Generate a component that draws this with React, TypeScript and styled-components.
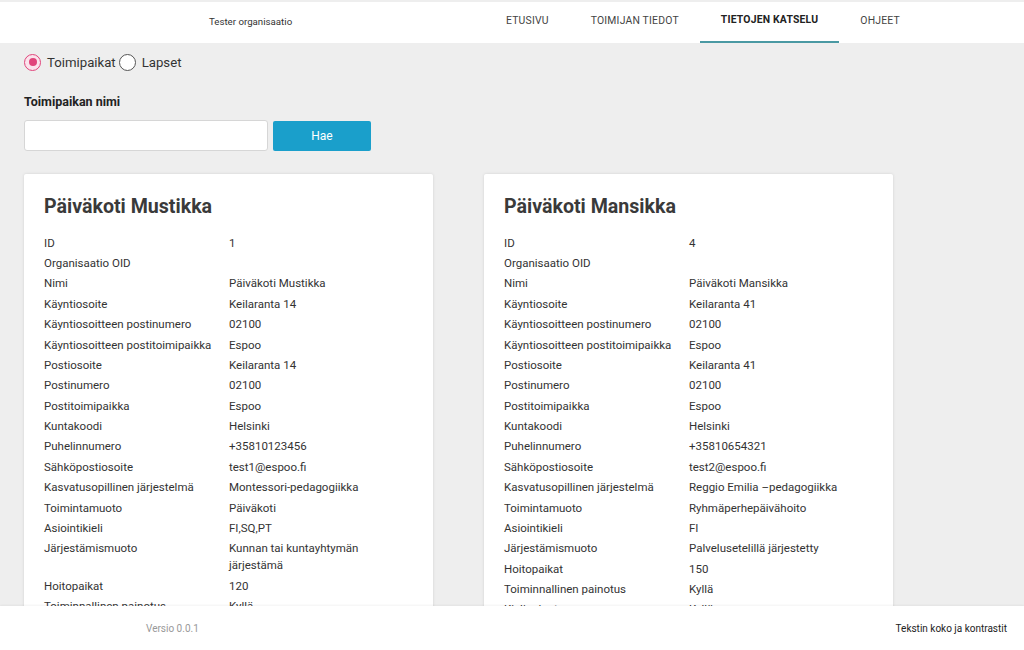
import * as React from "react";
import styled, { createGlobalStyle } from "styled-components";

const GlobalStyle = createGlobalStyle`
  html, body {
    margin: 0;
    padding: 0;
    height: 100%;
  }
  body {
    font-family: Roboto, "Noto Sans", "Liberation Sans", sans-serif;
    background: #eeeeee;
    color: #222;
  }
  * { box-sizing: border-box; }
`;

const SPage = styled.div`
  height: 100vh;
  display: flex;
  flex-direction: column;
  overflow: hidden;
`;

const SHeader = styled.header`
  flex: 0 0 auto;
  height: 41px;
  margin-top: 2px;
  background: #ffffff;
  display: flex;
  align-items: stretch;
`;

const SOrg = styled.div`
  width: 485px;
  padding-left: 209px;
  display: flex;
  align-items: center;
  font-size: 9.7px;
  color: #333;
  padding-bottom: 2px;
`;

const SNav = styled.nav`
  display: flex;
  align-items: stretch;
`;

interface ITabProps {
  active?: boolean;
}

const STab = styled.div<ITabProps>`
  padding: 0 21px;
  display: flex;
  align-items: center;
  font-size: 10.4px;
  letter-spacing: 0.2px;
  text-transform: uppercase;
  font-weight: ${({ active }) => (active ? 700 : 400)};
  color: ${({ active }) => (active ? "#222" : "#444")};
  border-bottom: 2px solid ${({ active }) => (active ? "#4a99a3" : "transparent")};
  padding-bottom: ${({ active }) => (active ? "4px" : "2px")};
`;

const SMain = styled.main`
  flex: 1 1 auto;
  overflow: hidden;
  padding: 9px 24px 0;
`;

const SRadioRow = styled.div`
  display: flex;
  align-items: center;
  height: 20px;
  font-size: 13.2px;
  color: #333;
`;

const SRadioLabel = styled.label`
  display: flex;
  align-items: center;
  gap: 6px;
  margin-right: 3px;
`;

const SRadioCircle = styled.span<{ checked?: boolean }>`
  width: 17px;
  height: 17px;
  border-radius: 50%;
  border: 1.5px solid ${({ checked }) => (checked ? "#e0457b" : "#555")};
  background: ${({ checked }) => (checked ? "#fbe3ec" : "#fff")};
  display: flex;
  align-items: center;
  justify-content: center;
  &::after {
    content: "";
    display: ${({ checked }) => (checked ? "block" : "none")};
    width: 8px;
    height: 8px;
    border-radius: 50%;
    background: #e0457b;
  }
`;

const SFieldLabel = styled.div`
  margin-top: 22px;
  font-size: 12.5px;
  font-weight: 700;
  color: #222;
`;

const SSearchRow = styled.div`
  margin-top: 11px;
  display: flex;
  gap: 5px;
  align-items: center;
`;

const SInput = styled.input`
  width: 244px;
  height: 31px;
  border: 1px solid #d6d6d6;
  border-radius: 3px;
  background: #fff;
  outline: none;
  font-family: inherit;
`;

const SButton = styled.button`
  width: 98px;
  height: 30px;
  border: none;
  border-radius: 2px;
  background: #1a9fcb;
  color: #fff;
  font-family: inherit;
  font-size: 12px;
`;

const SCards = styled.div`
  margin-top: 23px;
  display: flex;
  gap: 51px;
  align-items: flex-start;
`;

const SCard = styled.section`
  width: 409px;
  background: #fff;
  box-shadow: 0 0 3px rgba(0, 0, 0, 0.12);
  border-radius: 2px;
  padding: 20px 20px 20px;
`;

const STitle = styled.h2`
  margin: 0 0 13px;
  font-size: 19.6px;
  font-weight: 700;
  color: #3a3a3a;
  line-height: 26px;
`;

const SGrid = styled.div`
  display: grid;
  grid-template-columns: 185px 160px;
  font-size: 11.5px;
  line-height: 17px;
  color: #333;
`;

const SCell = styled.div`
  padding: 1.7px 0;
`;

const SFooter = styled.footer`
  flex: 0 0 auto;
  height: 44px;
  background: #fff;
  box-shadow: 0 -1px 2px rgba(0, 0, 0, 0.05);
  display: flex;
  align-items: center;
  justify-content: space-between;
  padding: 0 17px 0 146px;
  font-size: 10px;
  position: relative;
`;

const SVersion = styled.span`
  color: #999;
`;

const SLink = styled.span`
  color: #222;
`;

type Row = [string, string];

const mustikka: Row[] = [
  ["ID", "1"],
  ["Organisaatio OID", ""],
  ["Nimi", "Päiväkoti Mustikka"],
  ["Käyntiosoite", "Keilaranta 14"],
  ["Käyntiosoitteen postinumero", "02100"],
  ["Käyntiosoitteen postitoimipaikka", "Espoo"],
  ["Postiosoite", "Keilaranta 14"],
  ["Postinumero", "02100"],
  ["Postitoimipaikka", "Espoo"],
  ["Kuntakoodi", "Helsinki"],
  ["Puhelinnumero", "+35810123456"],
  ["Sähköpostiosoite", "test1@espoo.fi"],
  ["Kasvatusopillinen järjestelmä", "Montessori-pedagogiikka"],
  ["Toimintamuoto", "Päiväkoti"],
  ["Asiointikieli", "FI,SQ,PT"],
  ["Järjestämismuoto", "Kunnan tai kuntayhtymän järjestämä"],
  ["Hoitopaikat", "120"],
  ["Toiminnallinen painotus", "Kyllä"],
  ["Kielipainotus", "Kyllä"],
];

const mansikka: Row[] = [
  ["ID", "4"],
  ["Organisaatio OID", ""],
  ["Nimi", "Päiväkoti Mansikka"],
  ["Käyntiosoite", "Keilaranta 41"],
  ["Käyntiosoitteen postinumero", "02100"],
  ["Käyntiosoitteen postitoimipaikka", "Espoo"],
  ["Postiosoite", "Keilaranta 41"],
  ["Postinumero", "02100"],
  ["Postitoimipaikka", "Espoo"],
  ["Kuntakoodi", "Helsinki"],
  ["Puhelinnumero", "+35810654321"],
  ["Sähköpostiosoite", "test2@espoo.fi"],
  ["Kasvatusopillinen järjestelmä", "Reggio Emilia –pedagogiikka"],
  ["Toimintamuoto", "Ryhmäperhepäivähoito"],
  ["Asiointikieli", "FI"],
  ["Järjestämismuoto", "Palvelusetelillä järjestetty"],
  ["Hoitopaikat", "150"],
  ["Toiminnallinen painotus", "Kyllä"],
  ["Kielipainotus", "Kyllä"],
];

function Card(props: { title: string; rows: Row[] }) {
  const { title, rows } = props;
  return (
    <SCard>
      <STitle>{title}</STitle>
      <SGrid>
        {rows.map(([k, v], i) => (
          <React.Fragment key={i}>
            <SCell>{k}</SCell>
            <SCell>{v}</SCell>
          </React.Fragment>
        ))}
      </SGrid>
    </SCard>
  );
}

export default function App() {
  return (
    <>
      <GlobalStyle />
      <SPage>
        <SHeader>
          <SOrg>Tester organisaatio</SOrg>
          <SNav>
            <STab>Etusivu</STab>
            <STab>Toimijan tiedot</STab>
            <STab active>Tietojen katselu</STab>
            <STab>Ohjeet</STab>
          </SNav>
        </SHeader>
        <SMain>
          <SRadioRow>
            <SRadioLabel>
              <SRadioCircle checked />
              Toimipaikat
            </SRadioLabel>
            <SRadioLabel>
              <SRadioCircle />
              Lapset
            </SRadioLabel>
          </SRadioRow>
          <SFieldLabel>Toimipaikan nimi</SFieldLabel>
          <SSearchRow>
            <SInput type="text" />
            <SButton>Hae</SButton>
          </SSearchRow>
          <SCards>
            <Card title="Päiväkoti Mustikka" rows={mustikka} />
            <Card title="Päiväkoti Mansikka" rows={mansikka} />
          </SCards>
        </SMain>
        <SFooter>
          <SVersion>Versio 0.0.1</SVersion>
          <SLink>Tekstin koko ja kontrastit</SLink>
        </SFooter>
      </SPage>
    </>
  );
}
